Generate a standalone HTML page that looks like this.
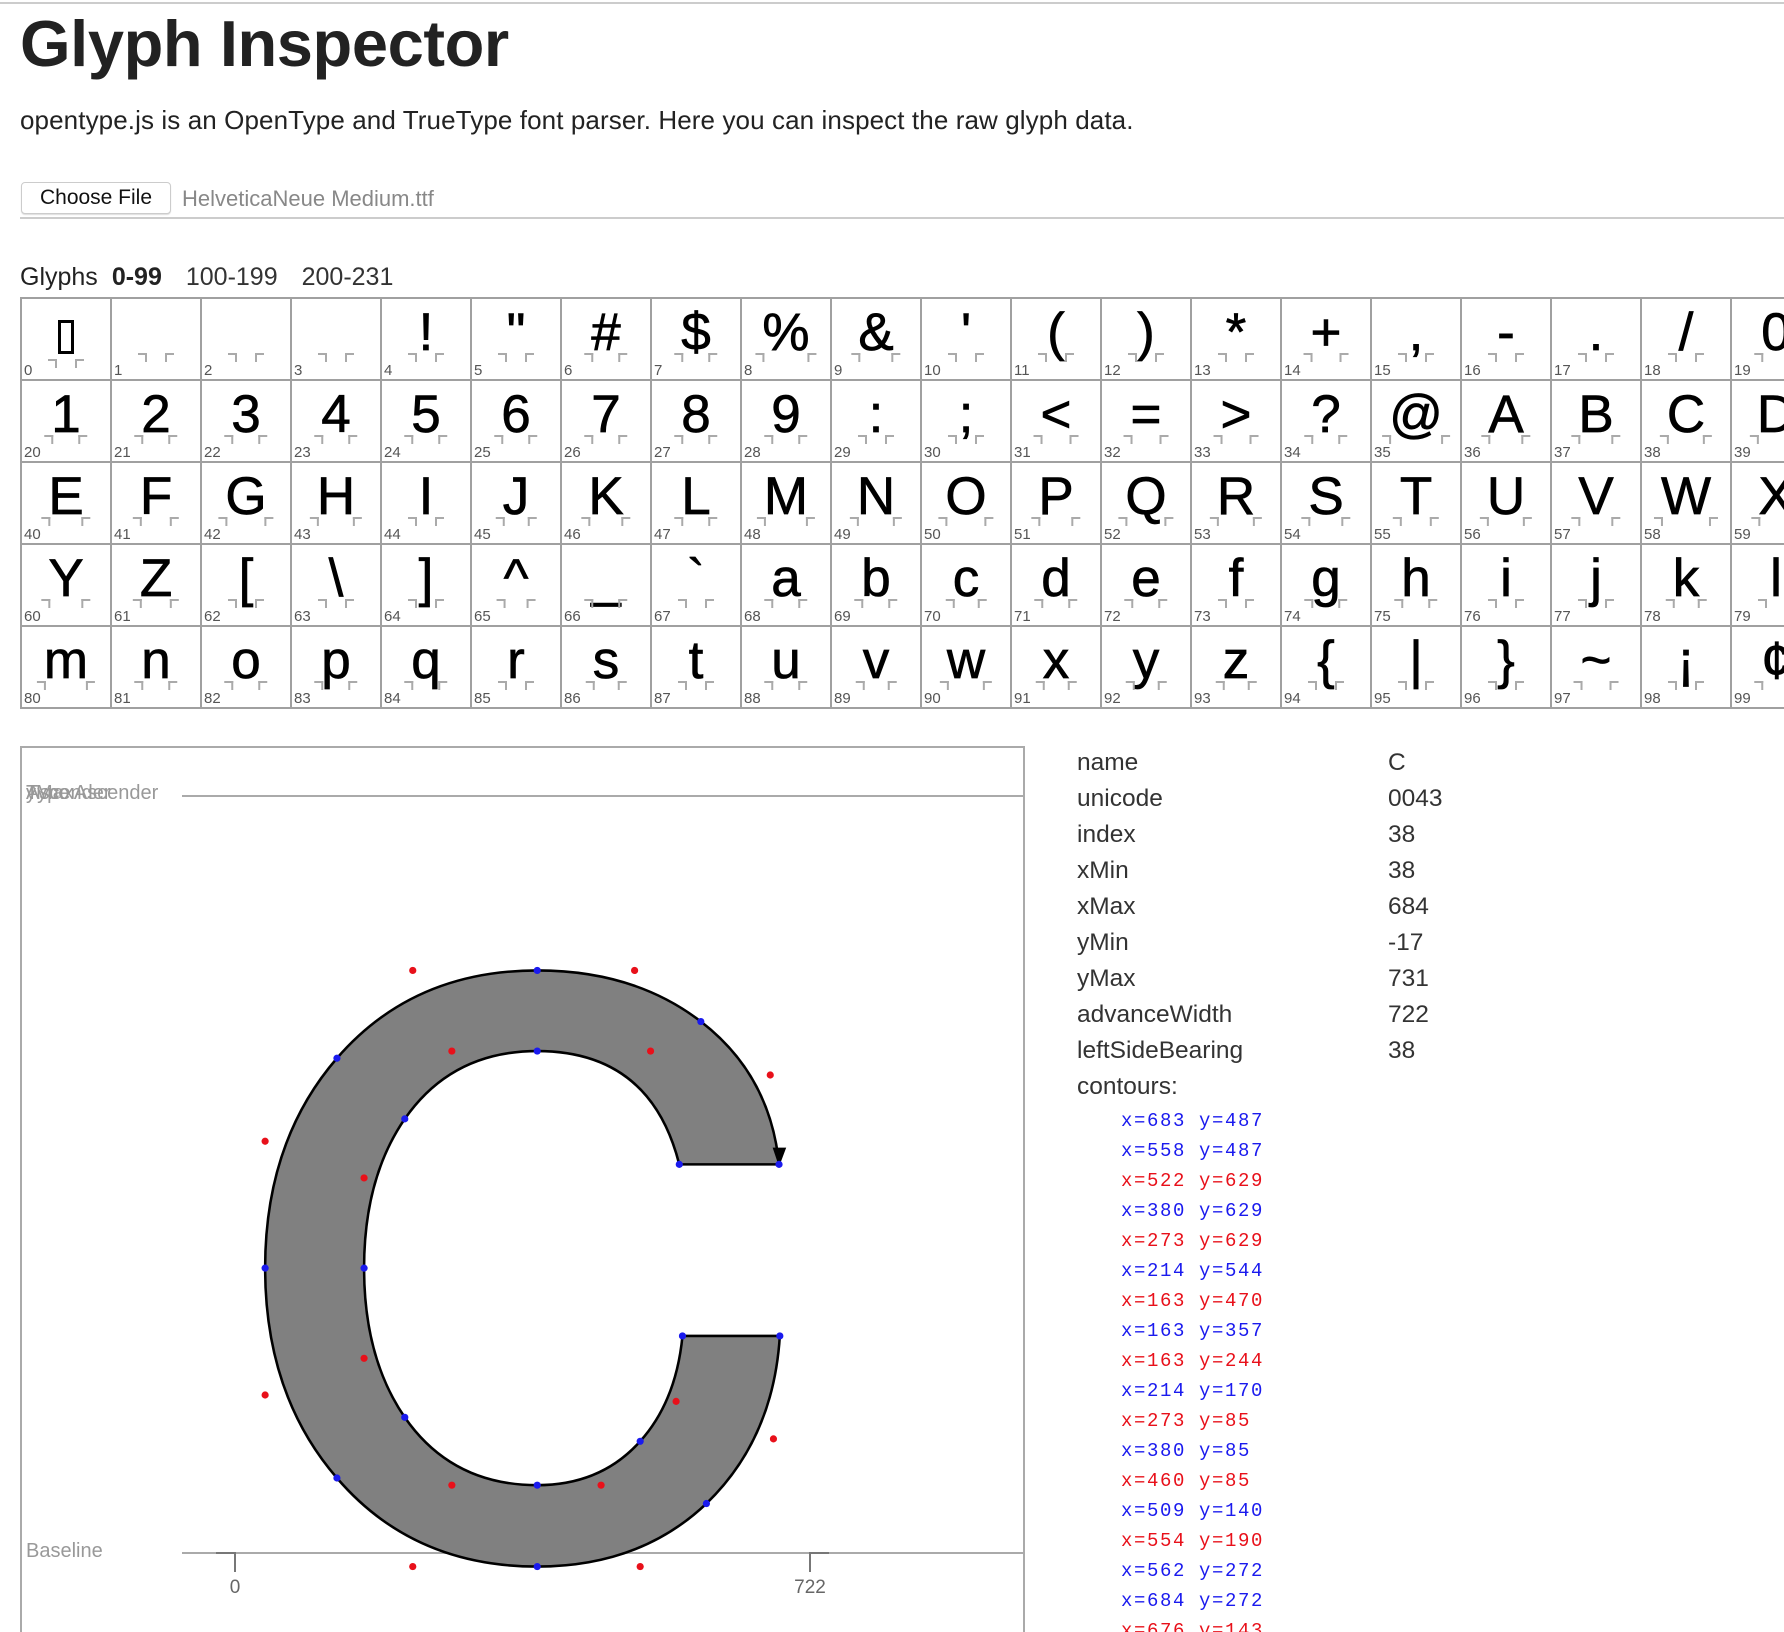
<!DOCTYPE html>
<html><head><meta charset="utf-8">
<style>
html,body{margin:0;padding:0;width:1784px;height:1632px;overflow:hidden;background:#fff;font-family:"Liberation Sans",Arial,sans-serif;color:#222;position:relative}
.abs{position:absolute}
.top{left:0;top:2px;width:1784px;height:2px;background:#ccc}
h1{position:absolute;left:20px;top:2px;margin:0;font-size:65px;font-weight:bold;color:#222;letter-spacing:-0.4px;line-height:84px}
.p{left:20px;top:104px;font-size:26px;line-height:32px;color:#222;letter-spacing:0.1px}
.btn{left:21px;top:182px;width:150px;height:32px;border:1px solid #ccc;border-radius:4px;box-sizing:border-box;font-size:21px;line-height:30px;text-align:center;color:#111;background:#fff;box-shadow:0 1px 1px #ddd}
.fn{left:182px;top:184px;font-size:22px;line-height:30px;color:#888}
.hr{left:20px;top:217px;width:1764px;height:2px;background:#ccc}
.gl{left:20px;top:262px;font-size:25px;line-height:30px;color:#222}
.gl b{margin-left:14px}
.gl span{margin-left:24px;color:#333}
.grid{left:20px;top:297px;width:1802px;height:412px;border-top:2px solid #a0a0a0;border-left:2px solid #a0a0a0;box-sizing:border-box}
.c{position:absolute;width:90px;height:82px;box-sizing:border-box;border-right:2px solid #a0a0a0;border-bottom:2px solid #a0a0a0}
.c i{position:absolute;left:2px;bottom:-1px;font-style:normal;font-size:15px;line-height:18px;color:#555}
.c s{position:absolute;left:50%;transform:translateX(-50%);top:7px;font-size:53px;line-height:54px;text-decoration:none;color:#000;-webkit-text-stroke:0.7px #000;white-space:pre;min-width:22px;text-align:center}
.c s:before,.c s:after{content:"";position:absolute;top:47px;width:7px;height:7px;border-top:2px solid #aaa}
.c s:before{left:-7px;border-right:2px solid #aaa}
.c s:after{right:-7px;border-left:2px solid #aaa}
.box{left:20px;top:746px;width:1005px;height:900px;border:2px solid #aaa;box-sizing:border-box}
.tb{left:1077px;font-size:24.5px;line-height:36px;color:#333}
.tv{left:1388px;font-size:24.5px;line-height:36px;color:#333}
.pts{left:1121px;top:1106px;font-family:"Liberation Mono",monospace;font-size:19px;line-height:30px;letter-spacing:1.6px}
.b{color:#1a1aee}.r{color:#e8101a}
</style></head><body>
<div class="abs top"></div>
<h1>Glyph Inspector</h1>
<div class="abs p">opentype.js is an OpenType and TrueType font parser. Here you can inspect the raw glyph data.</div>
<div class="abs btn">Choose File</div>
<div class="abs fn">HelveticaNeue Medium.ttf</div>
<div class="abs hr"></div>
<div class="abs gl">Glyphs<b>0-99</b><span>100-199</span><span>200-231</span></div>
<div class="abs grid" id="g">
<div class="c" style="left:0;top:0"><s style="font-size:40px;top:13px"><span style="display:inline-block;width:16px;height:34px;border:3px solid #000;box-sizing:border-box;vertical-align:-2px"></span></s><i>0</i></div>
<div class="c" style="left:90px;top:0"><s> </s><i>1</i></div>
<div class="c" style="left:180px;top:0"><s> </s><i>2</i></div>
<div class="c" style="left:270px;top:0"><s> </s><i>3</i></div>
<div class="c" style="left:360px;top:0"><s>!</s><i>4</i></div>
<div class="c" style="left:450px;top:0"><s>"</s><i>5</i></div>
<div class="c" style="left:540px;top:0"><s>#</s><i>6</i></div>
<div class="c" style="left:630px;top:0"><s>$</s><i>7</i></div>
<div class="c" style="left:720px;top:0"><s>%</s><i>8</i></div>
<div class="c" style="left:810px;top:0"><s>&amp;</s><i>9</i></div>
<div class="c" style="left:900px;top:0"><s>'</s><i>10</i></div>
<div class="c" style="left:990px;top:0"><s>(</s><i>11</i></div>
<div class="c" style="left:1080px;top:0"><s>)</s><i>12</i></div>
<div class="c" style="left:1170px;top:0"><s>*</s><i>13</i></div>
<div class="c" style="left:1260px;top:0"><s>+</s><i>14</i></div>
<div class="c" style="left:1350px;top:0"><s>,</s><i>15</i></div>
<div class="c" style="left:1440px;top:0"><s>-</s><i>16</i></div>
<div class="c" style="left:1530px;top:0"><s>.</s><i>17</i></div>
<div class="c" style="left:1620px;top:0"><s>/</s><i>18</i></div>
<div class="c" style="left:1710px;top:0"><s>0</s><i>19</i></div>

<div class="c" style="left:0;top:82px"><s>1</s><i>20</i></div>
<div class="c" style="left:90px;top:82px"><s>2</s><i>21</i></div>
<div class="c" style="left:180px;top:82px"><s>3</s><i>22</i></div>
<div class="c" style="left:270px;top:82px"><s>4</s><i>23</i></div>
<div class="c" style="left:360px;top:82px"><s>5</s><i>24</i></div>
<div class="c" style="left:450px;top:82px"><s>6</s><i>25</i></div>
<div class="c" style="left:540px;top:82px"><s>7</s><i>26</i></div>
<div class="c" style="left:630px;top:82px"><s>8</s><i>27</i></div>
<div class="c" style="left:720px;top:82px"><s>9</s><i>28</i></div>
<div class="c" style="left:810px;top:82px"><s>:</s><i>29</i></div>
<div class="c" style="left:900px;top:82px"><s>;</s><i>30</i></div>
<div class="c" style="left:990px;top:82px"><s>&lt;</s><i>31</i></div>
<div class="c" style="left:1080px;top:82px"><s>=</s><i>32</i></div>
<div class="c" style="left:1170px;top:82px"><s>&gt;</s><i>33</i></div>
<div class="c" style="left:1260px;top:82px"><s>?</s><i>34</i></div>
<div class="c" style="left:1350px;top:82px"><s>@</s><i>35</i></div>
<div class="c" style="left:1440px;top:82px"><s>A</s><i>36</i></div>
<div class="c" style="left:1530px;top:82px"><s>B</s><i>37</i></div>
<div class="c" style="left:1620px;top:82px"><s>C</s><i>38</i></div>
<div class="c" style="left:1710px;top:82px"><s>D</s><i>39</i></div>

<div class="c" style="left:0;top:164px"><s>E</s><i>40</i></div>
<div class="c" style="left:90px;top:164px"><s>F</s><i>41</i></div>
<div class="c" style="left:180px;top:164px"><s>G</s><i>42</i></div>
<div class="c" style="left:270px;top:164px"><s>H</s><i>43</i></div>
<div class="c" style="left:360px;top:164px"><s>I</s><i>44</i></div>
<div class="c" style="left:450px;top:164px"><s>J</s><i>45</i></div>
<div class="c" style="left:540px;top:164px"><s>K</s><i>46</i></div>
<div class="c" style="left:630px;top:164px"><s>L</s><i>47</i></div>
<div class="c" style="left:720px;top:164px"><s>M</s><i>48</i></div>
<div class="c" style="left:810px;top:164px"><s>N</s><i>49</i></div>
<div class="c" style="left:900px;top:164px"><s>O</s><i>50</i></div>
<div class="c" style="left:990px;top:164px"><s>P</s><i>51</i></div>
<div class="c" style="left:1080px;top:164px"><s>Q</s><i>52</i></div>
<div class="c" style="left:1170px;top:164px"><s>R</s><i>53</i></div>
<div class="c" style="left:1260px;top:164px"><s>S</s><i>54</i></div>
<div class="c" style="left:1350px;top:164px"><s>T</s><i>55</i></div>
<div class="c" style="left:1440px;top:164px"><s>U</s><i>56</i></div>
<div class="c" style="left:1530px;top:164px"><s>V</s><i>57</i></div>
<div class="c" style="left:1620px;top:164px"><s>W</s><i>58</i></div>
<div class="c" style="left:1710px;top:164px"><s>X</s><i>59</i></div>

<div class="c" style="left:0;top:246px"><s>Y</s><i>60</i></div>
<div class="c" style="left:90px;top:246px"><s>Z</s><i>61</i></div>
<div class="c" style="left:180px;top:246px"><s>[</s><i>62</i></div>
<div class="c" style="left:270px;top:246px"><s>\</s><i>63</i></div>
<div class="c" style="left:360px;top:246px"><s>]</s><i>64</i></div>
<div class="c" style="left:450px;top:246px"><s>^</s><i>65</i></div>
<div class="c" style="left:540px;top:246px"><s>_</s><i>66</i></div>
<div class="c" style="left:630px;top:246px"><s>`</s><i>67</i></div>
<div class="c" style="left:720px;top:246px"><s>a</s><i>68</i></div>
<div class="c" style="left:810px;top:246px"><s>b</s><i>69</i></div>
<div class="c" style="left:900px;top:246px"><s>c</s><i>70</i></div>
<div class="c" style="left:990px;top:246px"><s>d</s><i>71</i></div>
<div class="c" style="left:1080px;top:246px"><s>e</s><i>72</i></div>
<div class="c" style="left:1170px;top:246px"><s>f</s><i>73</i></div>
<div class="c" style="left:1260px;top:246px"><s>g</s><i>74</i></div>
<div class="c" style="left:1350px;top:246px"><s>h</s><i>75</i></div>
<div class="c" style="left:1440px;top:246px"><s>i</s><i>76</i></div>
<div class="c" style="left:1530px;top:246px"><s>j</s><i>77</i></div>
<div class="c" style="left:1620px;top:246px"><s>k</s><i>78</i></div>
<div class="c" style="left:1710px;top:246px"><s>l</s><i>79</i></div>

<div class="c" style="left:0;top:328px"><s>m</s><i>80</i></div>
<div class="c" style="left:90px;top:328px"><s>n</s><i>81</i></div>
<div class="c" style="left:180px;top:328px"><s>o</s><i>82</i></div>
<div class="c" style="left:270px;top:328px"><s>p</s><i>83</i></div>
<div class="c" style="left:360px;top:328px"><s>q</s><i>84</i></div>
<div class="c" style="left:450px;top:328px"><s>r</s><i>85</i></div>
<div class="c" style="left:540px;top:328px"><s>s</s><i>86</i></div>
<div class="c" style="left:630px;top:328px"><s>t</s><i>87</i></div>
<div class="c" style="left:720px;top:328px"><s>u</s><i>88</i></div>
<div class="c" style="left:810px;top:328px"><s>v</s><i>89</i></div>
<div class="c" style="left:900px;top:328px"><s>w</s><i>90</i></div>
<div class="c" style="left:990px;top:328px"><s>x</s><i>91</i></div>
<div class="c" style="left:1080px;top:328px"><s>y</s><i>92</i></div>
<div class="c" style="left:1170px;top:328px"><s>z</s><i>93</i></div>
<div class="c" style="left:1260px;top:328px"><s>{</s><i>94</i></div>
<div class="c" style="left:1350px;top:328px"><s>|</s><i>95</i></div>
<div class="c" style="left:1440px;top:328px"><s>}</s><i>96</i></div>
<div class="c" style="left:1530px;top:328px"><s>~</s><i>97</i></div>
<div class="c" style="left:1620px;top:328px"><s>¡</s><i>98</i></div>
<div class="c" style="left:1710px;top:328px"><s>¢</s><i>99</i></div>
</div>

<div class="abs box"></div>
<div class="abs" style="left:26px;top:781px;font-size:20px;line-height:24px;color:#999">
<span style="position:absolute;left:0;white-space:nowrap">yMax</span>
<span style="position:absolute;left:0;white-space:nowrap">Ascender</span>
<span style="position:absolute;left:0;white-space:nowrap">Typo Ascender</span>
</div>
<div class="abs" style="left:26px;top:1539px;font-size:20px;line-height:24px;color:#999">Baseline</div>

<svg class="abs" style="left:0;top:0" width="1784" height="1632" viewBox="0 0 1784 1632">
<line x1="182" y1="796" x2="1023" y2="796" stroke="#aaa" stroke-width="2"/>
<line x1="182" y1="1553" x2="1023" y2="1553" stroke="#aaa" stroke-width="2"/>
<path d="M216 1553 H235 V1572 M810 1572 V1553 H829" fill="none" stroke="#777" stroke-width="2"/>
<text x="235" y="1593" font-family="Liberation Sans" font-size="19" fill="#666" text-anchor="middle">0</text>
<text x="810" y="1593" font-family="Liberation Sans" font-size="19" fill="#666" text-anchor="middle">722</text>
<g transform="translate(234,1553) scale(0.798,-0.798)">
<path d="M683 487 L558 487 Q522 629 380 629 Q273 629 214 544 Q163 470 163 357 Q163 244 214 170 Q273 85 380 85 Q460 85 509 140 Q554 190 562 272 L684 272 Q676 143 592 62 Q509 -17 380 -17 Q224 -17 129 94 Q39 198 39 357 Q39 516 129 620 Q224 730 380 730 Q502 730 585 666 Q672 599 683 487 Z" fill="#808080" stroke="#000" stroke-width="3.2"/>
<path d="M675 508 L683 484 L692 508 Z" fill="#000"/>
<g fill="#1a1aee">
<circle cx="683" cy="487" r="4.5"/><circle cx="558" cy="487" r="4.5"/><circle cx="380" cy="629" r="4.5"/><circle cx="214" cy="544" r="4.5"/><circle cx="163" cy="357" r="4.5"/><circle cx="214" cy="170" r="4.5"/><circle cx="380" cy="85" r="4.5"/><circle cx="509" cy="140" r="4.5"/><circle cx="562" cy="272" r="4.5"/><circle cx="684" cy="272" r="4.5"/><circle cx="592" cy="62" r="4.5"/><circle cx="380" cy="-17" r="4.5"/><circle cx="129" cy="94" r="4.5"/><circle cx="39" cy="357" r="4.5"/><circle cx="129" cy="620" r="4.5"/><circle cx="380" cy="730" r="4.5"/><circle cx="585" cy="666" r="4.5"/>
</g>
<g fill="#e8101a">
<circle cx="522" cy="629" r="4.5"/><circle cx="273" cy="629" r="4.5"/><circle cx="163" cy="470" r="4.5"/><circle cx="163" cy="244" r="4.5"/><circle cx="273" cy="85" r="4.5"/><circle cx="460" cy="85" r="4.5"/><circle cx="554" cy="190" r="4.5"/><circle cx="676" cy="143" r="4.5"/><circle cx="509" cy="-17" r="4.5"/><circle cx="224" cy="-17" r="4.5"/><circle cx="39" cy="198" r="4.5"/><circle cx="39" cy="516" r="4.5"/><circle cx="224" cy="730" r="4.5"/><circle cx="502" cy="730" r="4.5"/><circle cx="672" cy="599" r="4.5"/>
</g>
</g>
</svg>

<div class="abs tb" style="top:745px">name<br>unicode<br>index<br>xMin<br>xMax<br>yMin<br>yMax<br>advanceWidth<br>leftSideBearing<br>contours:</div>
<div class="abs tv" style="top:745px">C<br>0043<br>38<br>38<br>684<br>-17<br>731<br>722<br>38</div>
<div class="abs pts">
<div class="b">x=683 y=487</div>
<div class="b">x=558 y=487</div>
<div class="r">x=522 y=629</div>
<div class="b">x=380 y=629</div>
<div class="r">x=273 y=629</div>
<div class="b">x=214 y=544</div>
<div class="r">x=163 y=470</div>
<div class="b">x=163 y=357</div>
<div class="r">x=163 y=244</div>
<div class="b">x=214 y=170</div>
<div class="r">x=273 y=85</div>
<div class="b">x=380 y=85</div>
<div class="r">x=460 y=85</div>
<div class="b">x=509 y=140</div>
<div class="r">x=554 y=190</div>
<div class="b">x=562 y=272</div>
<div class="b">x=684 y=272</div>
<div class="r">x=676 y=143</div>
</div>
</body></html>
